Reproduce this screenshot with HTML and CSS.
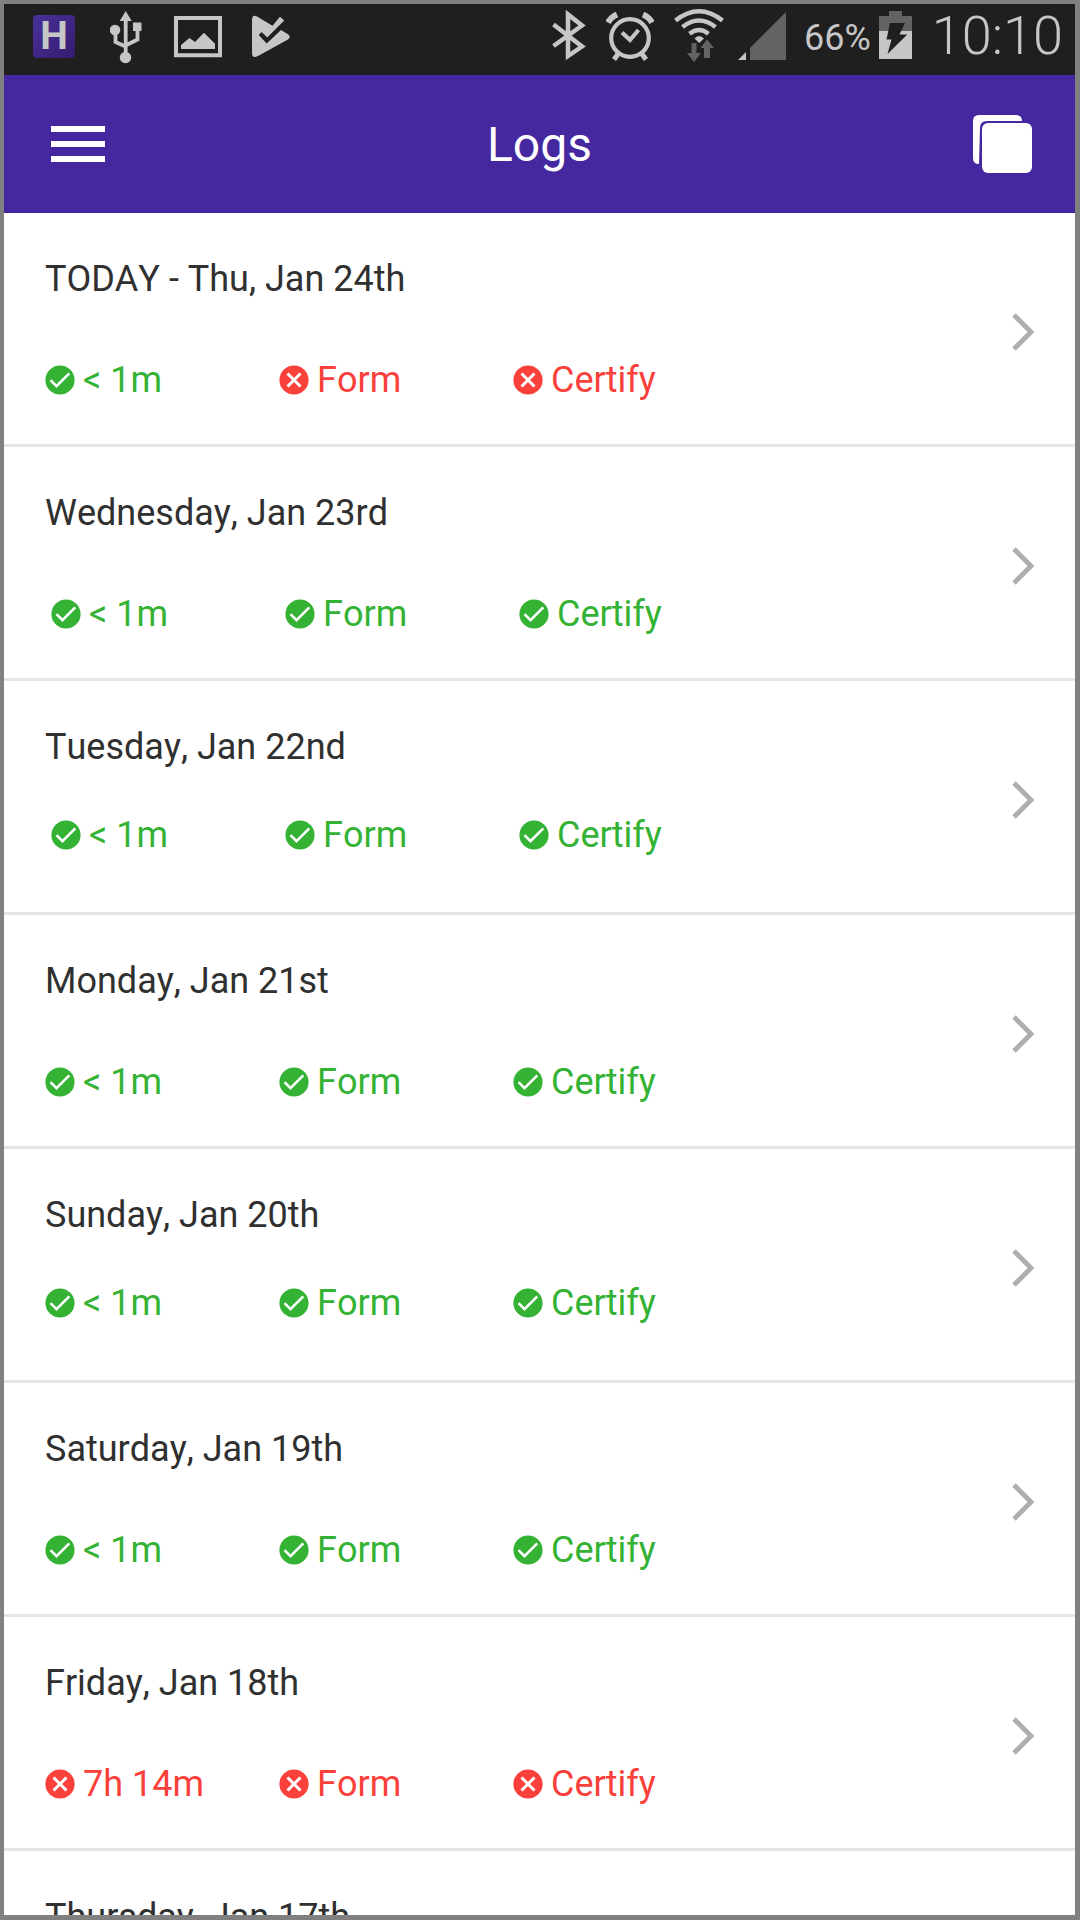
FILE: index.html
```html
<!DOCTYPE html>
<html lang="en">
<head>
<meta charset="utf-8">
<meta name="viewport" content="width=device-width, initial-scale=1">
<title>Logs</title>
<link rel="stylesheet" href="styles.css">
</head>
<body>
<svg class="sprite" aria-hidden="true">
  <symbol id="ok" viewBox="0 0 30 30"><circle cx="15" cy="15" r="14.6" fill="currentColor"/><path d="M5.5 15.2l6 6L24.3 8.300" fill="none" stroke="#fff" stroke-width="2.600"/></symbol>
  <symbol id="bad" viewBox="0 0 30 30"><circle cx="15" cy="15" r="14.600" fill="currentColor"/><path d="M8.500 8.500l13 13M21.500 8.500l-13 13" fill="none" stroke="#fff" stroke-width="3"/></symbol>
  <symbol id="next" viewBox="0 0 24 40"><path d="M3 3l17 17L3 37" fill="none" stroke="#aeaeae" stroke-width="4.800"/></symbol>
</svg>
<div class="screen">
  <div class="status-bar">
    <div class="notifications">
      <span class="app-badge">H</span>
      <svg class="usb" width="32" height="60" viewBox="110 4 32 60" fill="#c6c6c6"><path d="M125.700 11l6 10h-12z"/><circle cx="115" cy="30" r="5.300"/><path d="M133 22.500h8.500V31H133z"/><circle cx="125.500" cy="57.500" r="5.700"/><path d="M125.700 18v36M115.500 32v10l10 4.500M137.500 30v9.500l-12 6" fill="none" stroke="#c6c6c6" stroke-width="3.800"/></svg>
      <svg class="photo" width="48" height="60" viewBox="174 4 48 60"><path d="M176 18h44v37.200h-44z" fill="none" stroke="#c6c6c6" stroke-width="4"/><path d="M181 49v-4l8.500-7 5.500 4 9-9.200 11 11V49z" fill="#c6c6c6"/></svg>
      <svg class="play" width="40" height="60" viewBox="252 4 40 60"><path d="M252 20q0-6 5-3.500l15.500 9.300 7.500-9 4.200 3.700-17 17-5.500-5.500-3 3 8 8.500 14.300-13.500 7 4.300q3.500 2.500 0 5.200L258 56q-6 3-6-3z" fill="#c6c6c6"/></svg>
    </div>
    <div class="system">
      <svg class="bluetooth" width="34" height="60" viewBox="554 4 34 60"><path d="M555.500 24.500L584 46.500 570 56V14.500L584 25.500 555.500 46" fill="none" stroke="#c6c6c6" stroke-width="4.500"/></svg>
      <svg class="alarm" width="48" height="60" viewBox="607 4 48 60" fill="none" stroke="#c6c6c6"><circle cx="631" cy="38" r="18.800" stroke-width="4.200"/><path d="M623 32.500l8 7.500 8.500-10" stroke-width="4.200"/><path d="M609 22.500q3-5.500 9-8M653 22.500q-3-5.500-9-8" stroke-width="6"/><path d="M619 54l-4 5.500M643 54l4 5.500" stroke-width="5"/></svg>
      <svg class="wifi" width="50" height="60" viewBox="675 4 50 60"><g fill="none" stroke="#c6c6c6" stroke-width="4.500"><path d="M676.500 20.500q23.500-18.500 47 0"/><path d="M683.500 27q16.500-13 33 0"/><path d="M690.500 33.800q9.500-7.500 19 0"/></g><path d="M695.500 38.500q4.500-5 9.500 0l-4.800 4.500z" fill="#c6c6c6"/><path d="M692.500 43h5v10h4.500l-7 9-7-9h4.500zM705 58V48h-3.500l6.500-8.500 7 8.500h-4v10z" fill="#636363"/></svg>
      <svg class="signal" width="48" height="60" viewBox="739 4 48 60"><path d="M739 60l8-8v8z" fill="#c6c6c6"/><path d="M751 60V48l36-36v48z" fill="#636363"/></svg>
      <span class="percent">66%</span>
      <svg class="battery" width="33" height="60" viewBox="880 4 33 60"><path d="M880 16h10v-5h13v5h10v15h-33z" fill="#636363"/><path d="M880 31h33v28h-33z" fill="#c6c6c6"/><path d="M891 23h15l-5.500 11.500h7.800L888.500 54l4-14.500h-5z" fill="#1f1f1f"/></svg>
      <span class="clock">10:10</span>
    </div>
  </div>
  <header class="app-bar">
    <button class="icon-button" type="button" aria-label="Menu"><svg width="54" height="36" viewBox="0 0 54 36"><path d="M0 0h54v6H0zM0 15h54v6H0zM0 30h54v6H0z" fill="#fff"/></svg></button>
    <h1>Logs</h1>
    <button class="icon-button" type="button" aria-label="Copy"><svg width="60" height="60" viewBox="0 0 60 60"><path d="M7 50q-6 0-6-6V7q0-6 6-6h37q6 0 6 6H15q-7 0-7 7z" fill="#fff"/><rect x="10" y="9" width="50" height="50" rx="6" fill="#fff"/></svg></button>
  </header>
  <main class="logs">
    <a class="log" href="#jan-24"><span class="day">TODAY - Thu, Jan 24th</span>
      <span class="checks"><span class="check ok"><svg><use href="#ok"/></svg>&lt; 1m</span><span class="check bad"><svg><use href="#bad"/></svg>Form</span><span class="check bad"><svg><use href="#bad"/></svg>Certify</span></span>
      <svg class="next"><use href="#next"/></svg></a>
    <a class="log indented" href="#jan-23"><span class="day">Wednesday, Jan 23rd</span>
      <span class="checks"><span class="check ok"><svg><use href="#ok"/></svg>&lt; 1m</span><span class="check ok"><svg><use href="#ok"/></svg>Form</span><span class="check ok"><svg><use href="#ok"/></svg>Certify</span></span>
      <svg class="next"><use href="#next"/></svg></a>
    <a class="log indented tight" href="#jan-22"><span class="day">Tuesday, Jan 22nd</span>
      <span class="checks"><span class="check ok"><svg><use href="#ok"/></svg>&lt; 1m</span><span class="check ok"><svg><use href="#ok"/></svg>Form</span><span class="check ok"><svg><use href="#ok"/></svg>Certify</span></span>
      <svg class="next"><use href="#next"/></svg></a>
    <a class="log" href="#jan-21"><span class="day">Monday, Jan 21st</span>
      <span class="checks"><span class="check ok"><svg><use href="#ok"/></svg>&lt; 1m</span><span class="check ok"><svg><use href="#ok"/></svg>Form</span><span class="check ok"><svg><use href="#ok"/></svg>Certify</span></span>
      <svg class="next"><use href="#next"/></svg></a>
    <a class="log tight" href="#jan-20"><span class="day">Sunday, Jan 20th</span>
      <span class="checks"><span class="check ok"><svg><use href="#ok"/></svg>&lt; 1m</span><span class="check ok"><svg><use href="#ok"/></svg>Form</span><span class="check ok"><svg><use href="#ok"/></svg>Certify</span></span>
      <svg class="next"><use href="#next"/></svg></a>
    <a class="log" href="#jan-19"><span class="day">Saturday, Jan 19th</span>
      <span class="checks"><span class="check ok"><svg><use href="#ok"/></svg>&lt; 1m</span><span class="check ok"><svg><use href="#ok"/></svg>Form</span><span class="check ok"><svg><use href="#ok"/></svg>Certify</span></span>
      <svg class="next"><use href="#next"/></svg></a>
    <a class="log" href="#jan-18"><span class="day">Friday, Jan 18th</span>
      <span class="checks"><span class="check bad"><svg><use href="#bad"/></svg>7h 14m</span><span class="check bad"><svg><use href="#bad"/></svg>Form</span><span class="check bad"><svg><use href="#bad"/></svg>Certify</span></span>
      <svg class="next"><use href="#next"/></svg></a>
    <a class="log" href="#jan-17"><span class="day">Thursday, Jan 17th</span></a>
  </main>
</div>
</body>
</html>
```
FILE: styles.css
```css
* {
  box-sizing: border-box;
}

body {
  margin: 0;
  font-family: Roboto, "Liberation Sans", sans-serif;
  font-size: 36px;
  font-kerning: none;
  color: #303030;
  background: #fff;
}

svg {
  display: block;
  flex: none;
}

.sprite {
  position: absolute;
  width: 0;
  height: 0;
}

.screen {
  display: flex;
  flex-direction: column;
  height: 100vh;
  border: 4px solid #808080;
  border-right-width: 5px;
  border-bottom-width: 5px;
  overflow: hidden;
}

.status-bar {
  display: flex;
  justify-content: space-between;
  flex: none;
  height: 71px;
  padding: 0 12px 0 29px;
  background: #1f1f1f;
  color: #c6c6c6;
}

.notifications,
.system {
  display: flex;
  height: 60px;
}

.notifications {
  gap: 32px;
}

.play {
  margin-left: -2px;
}

.app-badge {
  width: 42px;
  height: 43px;
  margin: 11px 3px 0 0;
  border-radius: 4px;
  background: linear-gradient(135deg, #4a3199, #341c70);
  font-size: 39px;
  line-height: 43px;
  font-weight: 700;
  text-align: center;
}

.system {
  gap: 20px;
}

.signal {
  margin-left: -6px;
}

.percent {
  margin-left: -2px;
  line-height: 68px;
}

.battery {
  margin-left: -12px;
}

.clock {
  font-size: 54px;
  line-height: 64px;
  font-weight: 300;
}

.app-bar {
  display: flex;
  align-items: center;
  justify-content: space-between;
  flex: none;
  height: 138px;
  padding: 0 43px 0 47px;
  background: #45289f;
  color: #fff;
}

.app-bar h1 {
  margin: 0;
  padding: 2px 0 0 2px;
  font-size: 48px;
  line-height: 56px;
  font-weight: 400;
}

.icon-button {
  padding: 0;
  border: 0;
  background: none;
}

.logs {
  flex: 1;
  min-height: 0;
  overflow: hidden;
}

.log {
  display: grid;
  grid-template-columns: 1fr 24px;
  grid-template-rows: 42px 42px;
  row-gap: 59px;
  height: 234px;
  padding: 45px 40px 0 41px;
  border-bottom: 3px solid #e5e5e5;
  color: inherit;
  line-height: 42px;
  text-decoration: none;
}

.tight {
  row-gap: 46px;
}

.day,
.checks {
  grid-column: 1;
}

.checks {
  display: grid;
  grid-template-columns: repeat(3, 234px);
}

.indented .checks {
  padding-left: 6px;
}

.check {
  display: flex;
  align-items: center;
  gap: 8px;
}

.check svg {
  width: 30px;
  height: 30px;
}

.ok {
  color: #33b233;
}

.bad {
  color: #fa403a;
}

.next {
  grid-column: 2;
  grid-row: 1 / 3;
  width: 24px;
  height: 40px;
  margin-top: 54px;
}
```
